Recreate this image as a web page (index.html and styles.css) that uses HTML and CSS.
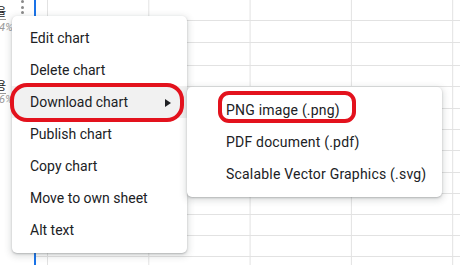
FILE: index.html
```html
<!DOCTYPE html>
<html lang="en">
  <head>
    <meta charset="UTF-8" />
    <meta name="viewport" content="width=device-width, initial-scale=1.0" />
    <title>Chart menu</title>
    <link rel="stylesheet" href="styles.css">
  </head>
  <body>
    <div class="sheet">
      <div class="row h21"></div>
      <div class="row h22"></div>
      <div class="row h23"></div>
      <div class="row h21"></div>
      <div class="row h22"></div>
      <div class="row h21"></div>
      <div class="row h21"></div>
      <div class="row h22"></div>
      <div class="row h21"></div>
      <div class="row h21"></div>
      <div class="row h21"></div>
      <div class="row h21"></div>
    </div>

    <div class="chart">
      <span class="label label-top">비율</span>
      <span class="pct pct-top">4%</span>
      <span class="label label-mid">비용</span>
      <span class="pct pct-mid">6%</span>
      <div class="dots"><i></i><i></i><i></i></div>
    </div>

    <div class="menu">
      <div class="item">Edit chart</div>
      <div class="item">Delete chart</div>
      <div class="item active">
        Download chart
        <svg class="arrow" width="6" height="8" viewBox="0 0 6 8"><polygon points="0,0 6,4 0,8" fill="#202124"/></svg>
      </div>
      <div class="item">Publish chart</div>
      <div class="item">Copy chart</div>
      <div class="item">Move to own sheet</div>
      <div class="item">Alt text</div>
    </div>

    <div class="submenu">
      <div class="item">PNG image (.png)</div>
      <div class="item">PDF document (.pdf)</div>
      <div class="item">Scalable Vector Graphics (.svg)</div>
    </div>

    <!-- red annotation marks -->
    <div class="mark mark-download"></div>
    <div class="mark mark-png"></div>
  </body>
</html>
```

FILE: styles.css
```css
body {
  margin: 0;
  width: 460px;
  height: 265px;
  overflow: hidden;
  position: relative;
  background: #fff;
  font-family: Roboto, "Noto Sans CJK KR", sans-serif;
  color: #202124;
}
.sheet {
  height: 265px;
  background-image: linear-gradient(to right, #e2e2e2 1px, transparent 1px);
  background-size: 101.3px 100%;
  background-position: 47px 0;
}
.row {
  box-sizing: border-box;
  border-bottom: 1px solid #e2e2e2;
}
.h21 { height: 21px; }
.h22 { height: 22px; }
.h23 { height: 23px; }

.chart {
  position: absolute;
  left: 0;
  top: 0;
  width: 34px;
  height: 265px;
  background: #fff;
  border-right: 2px solid #1a73e8;
  overflow: hidden;
}
.label {
  position: absolute;
  left: -14px;
  font-size: 11px;
  color: #222;
  border-bottom: 1px solid #999;
  line-height: 13px;
}
.label-top { top: 6px; }
.label-mid { top: 80px; }
.pct {
  position: absolute;
  left: -1px;
  font-size: 11px;
  color: #9a9a9a;
  font-style: italic;
}
.pct-top { top: 21px; }
.pct-mid { top: 93px; }
.dots {
  position: absolute;
  left: 21px;
  top: 0;
  display: flex;
  flex-direction: column;
  gap: 2.5px;
}
.dots i {
  width: 3px;
  height: 3px;
  border-radius: 50%;
  background: #8a8a8a;
}

.menu,
.submenu {
  position: absolute;
  background: #fff;
  border-radius: 5px;
  box-shadow: 0 2px 6px 2px rgba(60, 64, 67, 0.15), 0 1px 2px rgba(60, 64, 67, 0.3);
  padding: 6px 0 7px;
  font-size: 14px;
}
.menu {
  left: 12px;
  top: 16px;
  width: 175px;
}
.submenu {
  left: 187px;
  top: 87px;
  width: 255px;
  padding: 7px 0;
  letter-spacing: 0.2px;
}
.item {
  height: 32px;
  display: flex;
  align-items: center;
  padding-left: 18px;
  position: relative;
}
.submenu .item {
  padding-left: 39px;
}
.item.active {
  background: #f1f1f1;
}
.arrow {
  position: absolute;
  left: 153px;
  top: 13px;
}

.mark {
  position: absolute;
  box-sizing: border-box;
  border: 4px solid #e3121d;
}
.mark-download {
  left: 10px;
  top: 83px;
  width: 174px;
  height: 39px;
  border-radius: 17px;
}
.mark-png {
  left: 218px;
  top: 91px;
  width: 138px;
  height: 32px;
  border-radius: 11px;
}
```
